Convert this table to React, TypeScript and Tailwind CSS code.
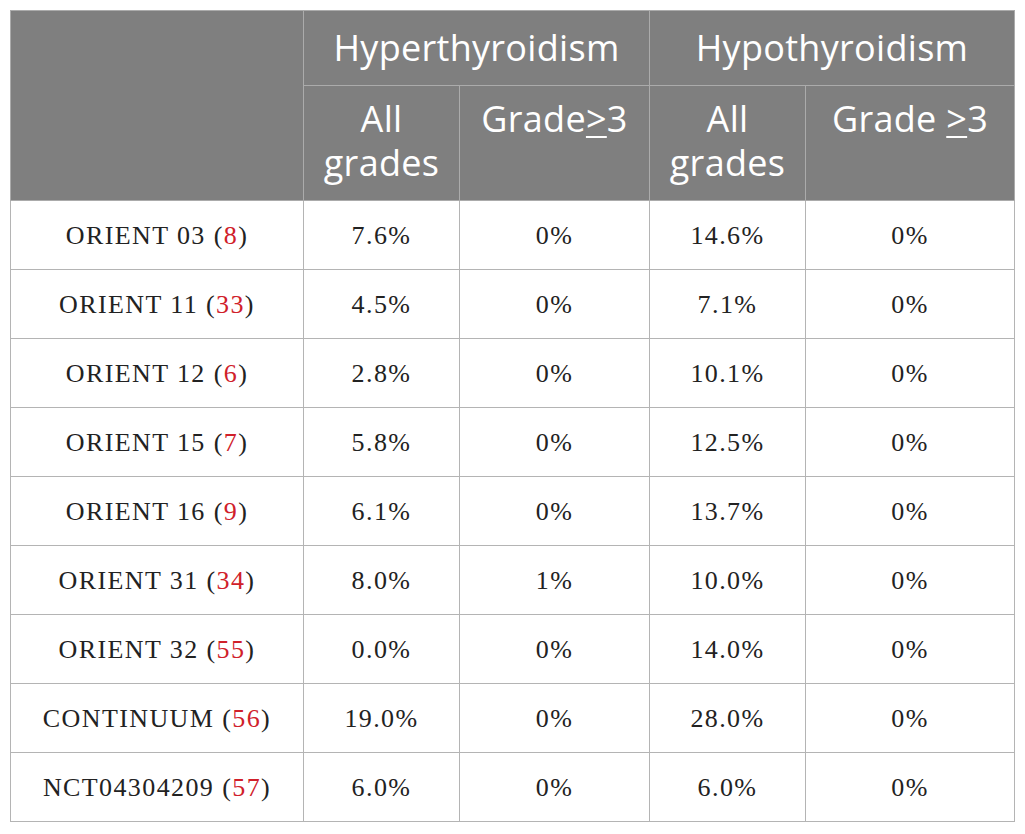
import React from "react";

const rows: [string, string, string, string, string, string][] = [
  ["ORIENT 03", "8", "7.6%", "0%", "14.6%", "0%"],
  ["ORIENT 11", "33", "4.5%", "0%", "7.1%", "0%"],
  ["ORIENT 12", "6", "2.8%", "0%", "10.1%", "0%"],
  ["ORIENT 15", "7", "5.8%", "0%", "12.5%", "0%"],
  ["ORIENT 16", "9", "6.1%", "0%", "13.7%", "0%"],
  ["ORIENT 31", "34", "8.0%", "1%", "10.0%", "0%"],
  ["ORIENT 32", "55", "0.0%", "0%", "14.0%", "0%"],
  ["CONTINUUM", "56", "19.0%", "0%", "28.0%", "0%"],
  ["NCT04304209", "57", "6.0%", "0%", "6.0%", "0%"],
];

const head = "border border-[#ababab] bg-[#7f7f7f] text-white font-['Open_Sans',sans-serif] text-[36px] tracking-[0.3px] font-normal text-center";
const cell = "border border-[#b4b4b4] text-center align-middle";

export default function App() {
  return (
    <div className="bg-white w-[1025px] h-[834px] pt-[10px] pl-[10px]">
      <table className="border-collapse table-fixed w-[1004px]">
        <colgroup>
          <col className="w-[293px]" />
          <col className="w-[156px]" />
          <col className="w-[190px]" />
          <col className="w-[156px]" />
          <col className="w-[209px]" />
        </colgroup>
        <thead>
          <tr className="h-[75px]">
            <th rowSpan={2} className={head}></th>
            <th colSpan={2} className={`${head} leading-[42px] pb-[1px]`}>Hyperthyroidism</th>
            <th colSpan={2} className={`${head} leading-[42px] pb-[1px]`}>Hypothyroidism</th>
          </tr>
          <tr className="h-[115px]">
            <th className={`${head} align-top leading-[44px] pt-[11px]`}>All<br />grades</th>
            <th className={`${head} align-top leading-[44px] pt-[11px]`}>
              Grade<span className="underline decoration-2 underline-offset-[4px]">&gt;</span>3
            </th>
            <th className={`${head} align-top leading-[44px] pt-[11px]`}>All<br />grades</th>
            <th className={`${head} align-top leading-[44px] pt-[11px]`}>
              Grade <span className="underline decoration-2 underline-offset-[4px]">&gt;</span>3
            </th>
          </tr>
        </thead>
        <tbody className="font-['Liberation_Serif',serif] text-[26px] tracking-[1.4px] text-[#222]">
          {rows.map((r, i) => (
            <tr key={i} className="h-[69px]">
              <td className={cell}>
                {r[0]} (<span className="text-[#d0202a]">{r[1]}</span>)
              </td>
              <td className={cell}>{r[2]}</td>
              <td className={cell}>{r[3]}</td>
              <td className={cell}>{r[4]}</td>
              <td className={cell}>{r[5]}</td>
            </tr>
          ))}
        </tbody>
      </table>
    </div>
  );
}
